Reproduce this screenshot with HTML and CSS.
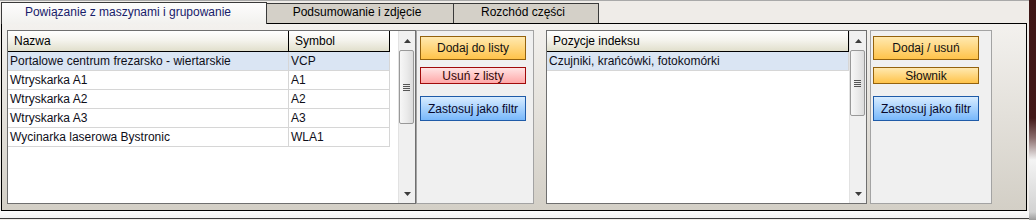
FILE: index.html
```html
<!DOCTYPE html>
<html lang="pl">
<head>
<meta charset="utf-8">
<title>Powiązanie z maszynami</title>
<link rel="stylesheet" href="styles.css">
</head>
<body>
<div class="main">
  <div class="tabstrip">
    <div class="tab tab-active">Powiązanie z maszynami i grupowanie</div>
    <div class="tab tab-2">Podsumowanie i zdjęcie</div>
    <div class="tab tab-3">Rozchód części</div>
  </div>
  <div class="panel">
    <div class="list list-machines">
      <div class="table">
        <div class="row head"><div class="cell c-name">Nazwa</div><div class="cell c-sym">Symbol</div></div>
        <div class="row sel"><div class="cell c-name">Portalowe centrum frezarsko - wiertarskie</div><div class="cell c-sym">VCP</div></div>
        <div class="row"><div class="cell c-name">Wtryskarka A1</div><div class="cell c-sym">A1</div></div>
        <div class="row"><div class="cell c-name">Wtryskarka A2</div><div class="cell c-sym">A2</div></div>
        <div class="row"><div class="cell c-name">Wtryskarka A3</div><div class="cell c-sym">A3</div></div>
        <div class="row"><div class="cell c-name">Wycinarka laserowa Bystronic</div><div class="cell c-sym">WLA1</div></div>
      </div>
      <div class="scrollbar">
        <div class="sb-btn"><svg class="arrow" width="7" height="4" viewBox="0 0 7 4"><polygon points="3.5,0 7,4 0,4"/></svg></div>
        <div class="thumb thumb-long"><span class="grip"></span></div>
        <div class="sb-space"></div>
        <div class="sb-btn"><svg class="arrow" width="7" height="4" viewBox="0 0 7 4"><polygon points="0,0 7,0 3.5,4"/></svg></div>
      </div>
    </div>
    <div class="btnpanel">
      <button class="btn btn-big orange">Dodaj do listy</button>
      <button class="btn btn-small red">Usuń z listy</button>
      <button class="btn btn-filter blue">Zastosuj jako filtr</button>
    </div>
    <div class="list list-index">
      <div class="table">
        <div class="row head"><div class="cell c-idx">Pozycje indeksu</div></div>
        <div class="row sel"><div class="cell c-idx">Czujniki, krańcówki, fotokomórki</div></div>
      </div>
      <div class="scrollbar">
        <div class="sb-btn"><svg class="arrow" width="7" height="4" viewBox="0 0 7 4"><polygon points="3.5,0 7,4 0,4"/></svg></div>
        <div class="thumb thumb-short"><span class="grip"></span></div>
        <div class="sb-space"></div>
        <div class="sb-btn"><svg class="arrow" width="7" height="4" viewBox="0 0 7 4"><polygon points="0,0 7,0 3.5,4"/></svg></div>
      </div>
    </div>
    <div class="btnpanel btnpanel-wide">
      <button class="btn btn-big orange">Dodaj / usuń</button>
      <button class="btn btn-small orange">Słownik</button>
      <button class="btn btn-filter blue">Zastosuj jako filtr</button>
    </div>
  </div>
  <div class="footer"></div>
</div>
<div class="edge"></div>
</body>
</html>
```
FILE: styles.css
```css
html, body {
  margin: 0;
  padding: 0;
}

body {
  width: 1036px;
  height: 220px;
  overflow: hidden;
  display: flex;
  background: #efece8;
  font-family: "Liberation Sans", Arial, sans-serif;
  font-size: 12px;
  color: #000;
}

.main {
  width: 1029px;
  flex: none;
  display: flex;
  flex-direction: column;
}

/* ---------- tabs ---------- */
.tabstrip {
  height: 23px;
  box-sizing: border-box;
  border-top: 1px solid #a9a9a9;
  padding-left: 1px;
  display: flex;
  align-items: flex-end;
  flex: none;
}

.tab {
  box-sizing: border-box;
  height: 20px;
  border-top: 1px solid #3a3a3a;
  border-right: 1px solid #3a3a3a;
  background: #d4d0c8;
  text-align: center;
  line-height: 16px;
  color: #000;
  white-space: nowrap;
}

.tab-active {
  position: relative;
  z-index: 1;
  width: 266px;
  height: 22px;
  margin-bottom: -1px;
  border-left: 1px solid #3a3a3a;
  background: linear-gradient(#fdfdfd, #f2f1ee);
  color: #17206a;
  line-height: 18px;
  padding-right: 12px;
}

.tab-2 {
  width: 187px;
  padding-right: 6px;
}

.tab-3 {
  width: 145px;
  padding-right: 6px;
}

/* ---------- panel ---------- */
.panel {
  flex: none;
  width: 1026px;
  height: 188px;
  margin-left: 1px;
  box-sizing: border-box;
  border: 1px solid #000;
  background: linear-gradient(#f3f1ee, #d3cfc6);
  display: flex;
  padding: 6px 0 6px 5px;
}

.footer {
  flex: none;
  height: 8px;
  box-sizing: border-box;
  border-bottom: 1px solid #3a3a3a;
  background: linear-gradient(#fbfbfb, #f1f1f1);
}

.edge {
  flex: 1;
  background: linear-gradient(#3e1616 0, #421919 118px, #8a6d6d 138px, #f4f4f4 160px, #d2d2d2 212px, #9a9a9a 220px);
}

/* ---------- lists ---------- */
.list {
  box-sizing: border-box;
  border: 1px solid #6f6f6f;
  background: #fff;
  display: flex;
}

.list-machines {
  width: 409px;
}

.list-index {
  width: 321px;
  margin-left: 12px;
}

.table {
  flex: 1;
}

.row {
  display: flex;
  width: fit-content;
  height: 19px;
  box-sizing: border-box;
  border-bottom: 1px solid #d6d6d6;
}

.cell {
  box-sizing: border-box;
  border-right: 1px solid #d6d6d6;
  padding: 1px 0 0 2px;
  line-height: 17px;
  white-space: nowrap;
  overflow: hidden;
  color: #0e0e18;
}

.c-name { width: 281px; }
.c-sym { width: 101px; }
.c-idx { width: 302px; }

.row.head {
  height: 21px;
  border-bottom-color: #000;
  background: linear-gradient(#ffffff 0%, #f5f4ee 45%, #e1dfcc 100%);
}

.head .cell {
  border-right-color: #000;
  padding: 0 0 0 6px;
  line-height: 20px;
  color: #000;
}

.row.sel {
  background: #dae5f3;
}

/* ---------- scrollbars ---------- */
.scrollbar {
  width: 17px;
  flex: none;
  box-sizing: border-box;
  border-left: 1px solid #e2e2e2;
  background: #f0f0f0;
  display: flex;
  flex-direction: column;
}

.sb-btn {
  height: 19px;
  flex: none;
  display: flex;
  align-items: center;
  justify-content: center;
}

.arrow polygon {
  fill: #3c3c3c;
}

.thumb {
  flex: none;
  width: 15px;
  box-sizing: border-box;
  border: 1px solid #999;
  border-radius: 2px;
  background: linear-gradient(to right, #f7f7f7, #ebebeb 50%, #dcdcdc);
  display: flex;
  align-items: center;
  justify-content: center;
}

.thumb-long { height: 74px; }
.thumb-short { height: 66px; }

.grip {
  width: 7px;
  height: 7px;
  background: repeating-linear-gradient(#555 0, #555 1px, transparent 1px, transparent 2px);
}

.sb-space {
  flex: 1;
}

/* ---------- button panels ---------- */
.btnpanel {
  width: 118px;
  flex: none;
  box-sizing: border-box;
  border: 1px solid #a3a3a3;
  background: #f0f0f0;
  padding: 5px 0 0 3px;
  display: flex;
  flex-direction: column;
  align-items: flex-start;
}

.btnpanel-wide {
  width: 122px;
  margin-left: 3px;
  padding-left: 2px;
}

.btn {
  box-sizing: border-box;
  width: 106px;
  margin: 0;
  padding: 0;
  border: 1px solid;
  border-radius: 0;
  font: inherit;
  font-size: 12px;
  line-height: 14px;
  text-align: center;
}

.btn-big { height: 24px; }
.btn-small { height: 17px; margin-top: 7px; }
.btn-filter { height: 25px; margin-top: 12px; }

.orange {
  border-color: #94620d;
  background: linear-gradient(#ffe9b0, #ffc34a);
  color: #111;
}

.red {
  border-color: #a00a0a;
  background: linear-gradient(#ffe3e3, #ffa8a8);
  color: #300606;
}

.blue {
  border-color: #1f5ba8;
  background: linear-gradient(#d8ecff, #78b8fb);
  color: #08082a;
}
```
